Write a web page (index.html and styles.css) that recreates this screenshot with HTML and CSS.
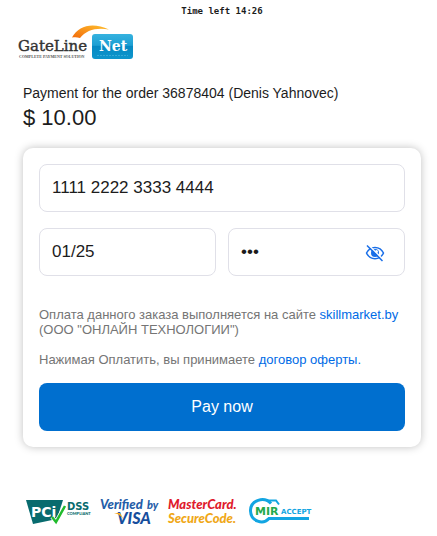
FILE: index.html
```html
<!DOCTYPE html>
<html lang="en">
  <head>
    <meta charset="UTF-8">
    <meta name="viewport" content="width=device-width, initial-scale=1.0">
    <title>GateLine.Net</title>
    <link rel="stylesheet" href="styles.css">
  </head>
  <body>
    <div class="timer">Time left 14:26</div>

    <main class="container">
      <header>
        <svg class="logo" width="120" height="38" viewBox="16 24 120 38" role="img" aria-label="GateLine.Net">
          <defs>
            <linearGradient id="arc" x1="0" y1="1" x2="1" y2="0">
              <stop offset="0" stop-color="#f26a0a"/>
              <stop offset="1" stop-color="#ffc12e"/>
            </linearGradient>
            <linearGradient id="net" x1="0" y1="0" x2="0" y2="1">
              <stop offset="0" stop-color="#35b2df"/>
              <stop offset="0.45" stop-color="#1d9fd3"/>
              <stop offset="0.5" stop-color="#0689c3"/>
              <stop offset="1" stop-color="#0f96cc"/>
            </linearGradient>
          </defs>
          <path d="M72 37.500C79 25 93 22 109 29.500C97 27 86 30 80 38C77 37 75 37 72 37.500Z" fill="url(#arc)"/>
          <text class="logo-name" x="18" y="51">GateLine</text>
          <text class="logo-slogan" x="19" y="58">COMPLETE PAYMENT SOLUTION</text>
          <rect x="92" y="34" width="41" height="25" rx="3" fill="url(#net)"/>
          <text class="logo-net" x="99" y="51">Net</text>
          <path d="M97 55.500H128" stroke="#5fc0e4" stroke-width="1" stroke-dasharray="2 1" opacity="0.5"/>
        </svg>
      </header>

      <section class="order">
        <div class="order-title">Payment for the order 36878404 (Denis Yahnovec)</div>
        <div class="order-sum">$ 10.00</div>
      </section>

      <form class="card">
        <div class="fields">
          <input class="field wide" type="text" aria-label="Card number" value="1111 2222 3333 4444">
          <input class="field" type="text" aria-label="Expiry date" value="01/25">
          <div class="field cvc">
            <input type="password" aria-label="CVC" value="123">
            <button class="eye" type="button" aria-label="Show CVC">
              <svg width="20" height="18" viewBox="0 0 20 18" fill="none" stroke="#1a6fe8" stroke-width="1.500">
                <path d="M1.500 9C5 1.500 15 1.500 18.500 9C15 16.500 5 16.500 1.500 9Z"/>
                <circle cx="10" cy="9" r="4" fill="#1a6fe8" stroke="none"/>
                <circle cx="11.500" cy="7.500" r="1.500" fill="#fff" stroke="none"/>
                <path d="M3.500 1L18.500 16" stroke="#fff" stroke-width="1.500"/>
                <path d="M2 1.500L17.500 17"/>
              </svg>
            </button>
          </div>
        </div>

        <div class="terms">
          <p>Оплата данного заказа выполняется на сайте <a href="#">skillmarket.by</a> (ООО "ОНЛАЙН ТЕХНОЛОГИИ")</p>
          <p>Нажимая Оплатить, вы принимаете <a href="#">договор оферты.</a></p>
        </div>

        <button class="pay" type="submit">Pay now</button>
      </form>

      <footer class="brands">
        <svg width="68" height="32" viewBox="25 497 68 32" role="img" aria-label="PCI DSS">
          <path d="M26 500H63L57 519L33 524Z" fill="#086b6e"/>
          <text class="pci" x="31" y="517">PCi</text>
          <path d="M52 517L56 522L65 506" fill="none" stroke="#fff" stroke-width="4"/>
          <path d="M52 517L56 522L65 506" fill="none" stroke="#20bb2c" stroke-width="2.500"/>
          <text class="dss" x="67" y="510">DSS</text>
          <text class="compliant" x="67" y="515">COMPLIANT</text>
        </svg>
        <svg width="60" height="32" viewBox="100 497 60 32" role="img" aria-label="Verified by Visa">
          <text class="verified" x="100" y="509">Verified</text>
          <text class="by" x="147" y="509">by</text>
          <text class="visa" x="117" y="524">VISA</text>
          <path d="M114 513H120L124 520C121 516 119 514 114 513Z" fill="#f5a81c"/>
        </svg>
        <svg width="74" height="32" viewBox="166 497 74 32" role="img" aria-label="MasterCard SecureCode">
          <text class="mastercard" x="167" y="509">MasterCard.</text>
          <text class="securecode" x="167" y="523">SecureCode.</text>
        </svg>
        <svg width="64" height="32" viewBox="248 497 64 32" role="img" aria-label="MIR Accept">
          <path d="M271 503.500C264 496 250.500 500 250.500 511C251 521.500 263 525 269 518.500H309" fill="none" stroke="#12a5e2" stroke-width="3"/>
          <path d="M266 500.500H276L279 504.500" fill="none" stroke="#12a5e2" stroke-width="2"/>
          <text class="mir" x="255" y="515">MIR</text>
          <text class="accept" x="281" y="514">ACCEPT</text>
        </svg>
      </footer>
    </main>
  </body>
</html>
```
FILE: styles.css
```css
* {
  box-sizing: border-box;
}

body {
  margin: 0;
  background-color: #ffffff;
  font-family: "Liberation Sans", Arial, sans-serif;
  color: #1c1c1c;
}

.timer {
  height: 24px;
  padding: 5px 0 0 7px;
  font: bold 9px/12px "DejaVu Sans Mono", monospace;
  text-align: center;
}

.container {
  padding: 0 16px;
}

.logo {
  display: block;
}

.logo-name {
  font: 15px "DejaVu Serif", serif;
  fill: #333333;
  stroke: #333333;
  stroke-width: 0.4;
}

.logo-slogan {
  font: bold 4px "Liberation Serif", serif;
  fill: #555555;
}

.logo-net {
  font: bold 14px "DejaVu Serif", serif;
  fill: #ffffff;
}

.order {
  margin: 23px 0 0 7px;
}

.order-title {
  font-size: 14px;
  line-height: 16px;
}

.order-sum {
  margin-top: 4px;
  font-size: 22px;
  line-height: 26px;
}

.card {
  margin: 17px 0 0 7px;
  padding: 16px;
  border-radius: 10px;
  box-shadow: 0 0 8px rgba(0, 0, 0, 0.25);
}

.fields {
  display: grid;
  grid-template-columns: 1fr 1fr;
  gap: 16px 12px;
}

.field {
  width: 100%;
  min-width: 0;
  height: 48px;
  padding: 0 12px;
  border: 1px solid #e0e0e8;
  border-radius: 8px;
  background-color: #ffffff;
  font: 17px "Liberation Sans", Arial, sans-serif;
  color: #1c1c1c;
}

.wide {
  grid-column: 1 / 3;
}

.cvc {
  display: flex;
  align-items: center;
  padding-right: 19px;
}

.cvc input {
  flex: 1;
  min-width: 0;
  padding: 0;
  border: none;
  outline: none;
  font: inherit;
  color: inherit;
}

.eye {
  padding: 2px 0 0;
  border: none;
  background: none;
  cursor: pointer;
}

.eye svg {
  display: block;
}

.terms {
  margin: 31px 0 16px;
  font-size: 13px;
  line-height: 15px;
  color: #757575;
}

.terms p {
  margin: 0 0 15px;
}

.terms p:last-child {
  margin: 0;
}

.terms a {
  color: #006be6;
  text-decoration: none;
}

.pay {
  display: block;
  width: 100%;
  height: 48px;
  border: none;
  border-radius: 8px;
  background-color: #006fcf;
  font: 16px "Liberation Sans", Arial, sans-serif;
  color: #ffffff;
  cursor: pointer;
}

.brands {
  display: flex;
  gap: 7px;
  margin: 50px 0 0 9px;
}

.brands text {
  font-family: Lato, sans-serif;
  font-weight: 900;
}

.brands .pci,
.brands .dss,
.brands .mir,
.brands .accept {
  font-family: "DejaVu Sans", sans-serif;
  font-weight: bold;
}

.brands .pci {
  font-size: 14px;
  fill: #ffffff;
}

.brands .dss {
  font-size: 10px;
  fill: #086b6e;
}

.brands .compliant {
  font-size: 4px;
  fill: #086b6e;
}

.brands .verified {
  font-size: 13px;
  font-style: italic;
  fill: #255da8;
}

.brands .by {
  font-size: 11px;
  font-style: italic;
  fill: #255da8;
}

.brands .visa {
  font-size: 16px;
  font-style: italic;
  fill: #174e9d;
}

.brands .mastercard {
  font-size: 13px;
  font-style: italic;
  fill: #e01b2c;
}

.brands .securecode {
  font-size: 13px;
  font-style: italic;
  fill: #f0a818;
}

.brands .mir {
  font-size: 11px;
  fill: #22a94b;
}

.brands .accept {
  font-size: 7px;
  fill: #12a5e2;
}
```
